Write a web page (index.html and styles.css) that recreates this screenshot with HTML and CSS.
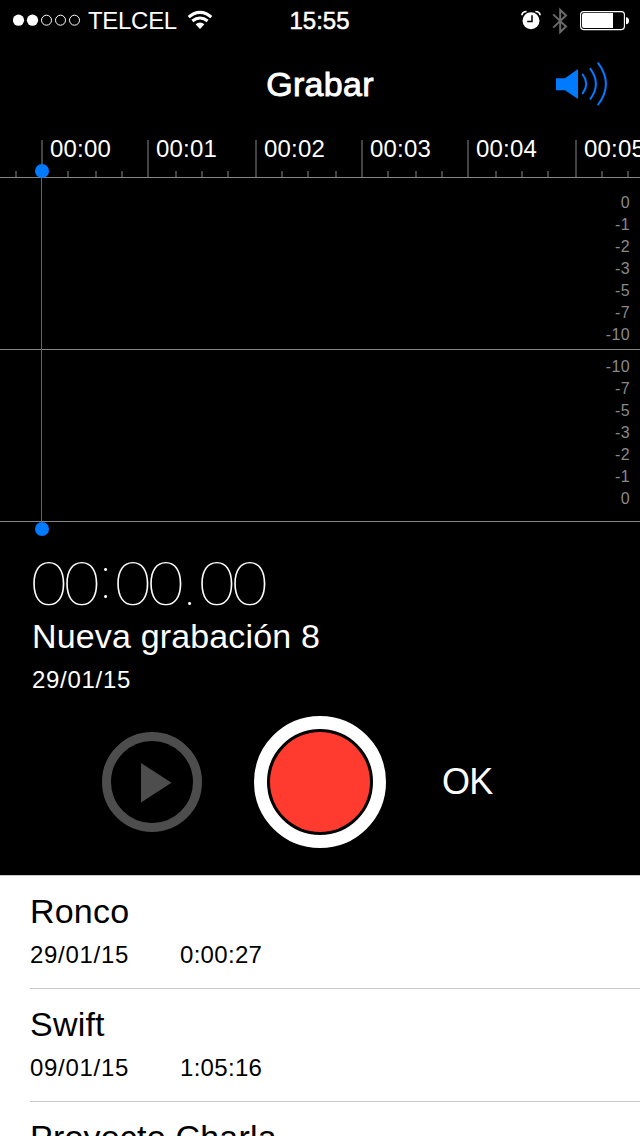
FILE: index.html
```html
<!DOCTYPE html>
<html lang="es">
<head>
<meta charset="utf-8">
<title>Grabar</title>
<link rel="stylesheet" href="styles.css">
</head>
<body>
<main class="screen">
  <header class="status">
    <div class="status-left">
      <svg class="signal" width="68" height="12" viewBox="0 0 68 12">
        <g fill="#fff"><circle cx="5.5" cy="6.2" r="5.6"/><circle cx="19.5" cy="6.2" r="5.6"/></g>
        <g fill="none" stroke="#fff"><circle cx="33.5" cy="6.2" r="5"/><circle cx="47.5" cy="6.2" r="5"/><circle cx="61.5" cy="6.2" r="5"/></g>
      </svg>
      <span class="carrier">TELCEL</span>
      <svg class="wifi" width="26" height="20" viewBox="0 0 26 20">
        <g fill="none" stroke="#fff" stroke-width="3.1">
          <path d="M1.7 7.2Q7 2.4 13 2.4T24.3 7.2"/>
          <path d="M5.4 11Q9 8 13 8T20.6 11"/>
        </g>
        <path fill="#fff" d="M13 18.9 8.6 14.3Q10.5 12.4 13 12.4T17.4 14.3Z"/>
      </svg>
    </div>
    <span class="clock">15:55</span>
    <div class="status-right">
      <svg width="20" height="20" viewBox="0 0 20 20">
        <circle cx="10" cy="10.8" r="8.5" fill="#fff"/>
        <path d="M11 5.3V11.4H6.2" fill="none" stroke="#000" stroke-width="1.5"/>
        <path d="M.9 5.3Q1.2 1.6 5.6 1.5M19.1 5.3Q18.8 1.6 14.4 1.5" fill="none" stroke="#fff" stroke-width="1.7"/>
      </svg>
      <svg class="bluetooth" width="16" height="28" viewBox="0 0 16 28">
        <path d="M1.2 7.4 14 19.6 8.2 25.1V2.9L14 8.4 1.2 20.6" fill="none" stroke="#6a6a6a" stroke-width="2"/>
      </svg>
      <svg class="battery" width="50" height="20" viewBox="0 0 50 20">
        <rect x=".6" y=".6" width="43.8" height="18" rx="3" fill="none" stroke="#fff" stroke-width="1.1"/>
        <path d="M4 2H33V17H4Q2 17 2 15V4Q2 2 4 2Z" fill="#fff"/>
        <path d="M46 6.3Q49 6.5 49 9.8T46 13.3Z" fill="#fff"/>
      </svg>
    </div>
  </header>

  <nav class="navbar">
    <h1 class="title">Grabar</h1>
    <svg class="speaker" width="54" height="46" viewBox="0 0 54 46">
      <path d="M1 16.2H10L23 7V37L10 28.2H1Z" fill="#007aff"/>
      <g fill="none" stroke="#007aff" stroke-width="2" stroke-linecap="round">
        <path d="M27.7 12.5Q34.8 22 27.7 31.3"/>
        <path d="M35.4 6.9Q46.4 22 35.4 36.8"/>
        <path d="M43.2 1.2Q58.6 22 43.2 42.5"/>
      </g>
    </svg>
  </nav>

  <section class="ruler">
    <svg class="ticks" width="640" height="38" viewBox="0 0 640 38">
      <path d="M42 0V38M148 0V38M256 0V38M362 0V38M468 0V38M576 0V38M16 31V38M68 31V38M96 31V38M122 31V38M176 31V38M202 31V38M228 31V38M282 31V38M308 31V38M336 31V38M388 31V38M416 31V38M442 31V38M496 31V38M522 31V38M548 31V38M602 31V38M628 31V38" stroke="#444" stroke-width="2"/>
    </svg>
    <div class="times">
      <span>00:00</span><span>00:01</span><span>00:02</span><span>00:03</span><span>00:04</span><span>00:05</span>
    </div>
  </section>

  <section class="wave">
    <div class="scale">
      <span>0</span><span>-1</span><span>-2</span><span>-3</span><span>-5</span><span>-7</span><span>-10</span>
    </div>
    <div class="scale">
      <span>-10</span><span>-7</span><span>-5</span><span>-3</span><span>-2</span><span>-1</span><span>0</span>
    </div>
    <div class="playhead"></div>
  </section>

  <section class="info">
    <div class="timer"><span>0</span><span>0</span><span class="colon">:</span><span>0</span><span>0</span><span class="point">.</span><span>0</span><span>0</span></div>
    <div class="name">Nueva grabación 8</div>
    <div class="date">29/01/15</div>
  </section>

  <section class="controls">
    <div class="play"><svg width="32" height="40" viewBox="0 0 32 40"><path d="M1 0 31.5 19.7 1 39.4Z" fill="#4d4d4d"/></svg></div>
    <div class="record"><div class="record-dot"></div></div>
    <div class="ok">OK</div>
  </section>

  <section class="list">
    <article class="row"><div class="row-name">Ronco</div><div class="meta"><span class="row-date">29/01/15</span><span>0:00:27</span></div></article>
    <article class="row"><div class="row-name">Swift</div><div class="meta"><span class="row-date">09/01/15</span><span>1:05:16</span></div></article>
    <article class="row"><div class="row-name">Proyecto Charla</div></article>
  </section>
</main>
</body>
</html>
```
FILE: styles.css
```css
* { box-sizing: border-box; }
body { margin: 0; background: #000; }
svg { display: block; }
.screen {
  width: 640px; height: 1136px; overflow: hidden;
  display: flex; flex-direction: column;
  background: #000; color: #fff;
  font-family: "Liberation Sans", Arial, sans-serif;
}
.screen > * { flex-shrink: 0; }

.status { height: 40px; display: grid; grid-template-columns: 1fr auto 1fr; align-items: center; padding: 0 10px 0 13px; }
.status-left { display: flex; align-items: center; }
.carrier { font-size: 24px; line-height: 28px; margin: 2px 0 0 7px; letter-spacing: -0.3px; }
.wifi { margin-left: 10px; }
.clock { font-size: 24px; line-height: 28px; margin: 2px 4px 0 0; -webkit-text-stroke: 0.5px #fff; }
.status-right { display: flex; align-items: center; justify-content: flex-end; }
.bluetooth { margin: 1px 12px 0 11px; }
.battery { margin-top: 2px; }

.navbar { height: 88px; display: grid; grid-template-columns: 1fr auto 1fr; align-items: center; padding: 0 31px; }
.title { grid-column: 2; margin: 0; font-size: 34px; line-height: 40px; font-weight: 400; letter-spacing: 0.3px; -webkit-text-stroke: 0.9px #fff; }
.speaker { justify-self: end; margin-top: 2px; }

.ruler { height: 50px; border-bottom: 1px solid #848484; position: relative; padding: 7px 0 0 50px; overflow: hidden; }
.ticks { position: absolute; left: 0; top: 12px; }
.times { display: grid; grid-template-columns: 106px 108px 106px 106px 108px 106px; font-size: 24px; line-height: 28px; letter-spacing: 0.2px; }

.wave { height: 344px; display: flex; flex-direction: column; position: relative; }
.scale {
  height: 172px; border-bottom: 1px solid #848484; padding: 14px 10px 0 0;
  display: flex; flex-direction: column; align-items: flex-end;
  font-size: 16px; line-height: 22px; letter-spacing: 0.4px; color: #8a8a8a;
}
.scale + .scale { padding-top: 6px; }
.playhead { position: absolute; left: 41px; top: -6px; width: 1px; height: 357px; background: #007aff; }
.playhead::before, .playhead::after { content: ""; position: absolute; left: -6px; width: 14px; height: 14px; border-radius: 50%; background: #007aff; }
.playhead::before { top: -8px; }
.playhead::after { bottom: -7px; }

.info { height: 183px; padding: 32px 32px 0; }
.timer { display: flex; height: 60px; font-family: Inter, "Liberation Sans", sans-serif; font-weight: 100; font-size: 58px; line-height: 60px; }
.timer span { width: 33px; text-align: center; transform: translateX(-0.5px) scaleX(1.2); }
.timer .colon, .timer .point { width: 18px; transform: translateX(-1.5px); }
.timer .colon { line-height: 47px; }
.name { font-size: 34px; line-height: 40px; margin-top: 2px; letter-spacing: 0.15px; }
.date { font-size: 24px; line-height: 28px; margin-top: 10px; letter-spacing: 0.7px; }

.controls { height: 170px; display: flex; align-items: flex-start; padding: 11px 0 0 102px; }
.play { width: 100px; height: 100px; margin-top: 16px; border: 9px solid #4d4d4d; border-radius: 50%; display: flex; align-items: center; padding: 1px 0 0 29px; }
.record { width: 132px; height: 132px; margin-left: 52px; border: 13px solid #fff; border-radius: 50%; padding: 3px; }
.record-dot { width: 100px; height: 100px; border-radius: 50%; background: #ff3b30; }
.ok { font-size: 36px; line-height: 42px; margin: 45px 0 0 56px; letter-spacing: -0.8px; }

.list { height: 261px; background: #fff; color: #000; border-top: 1px solid #c8c7cc; overflow: hidden; }
.row { height: 113px; margin-left: 30px; border-bottom: 1px solid #c8c7cc; padding-top: 15px; }
.row-name { font-size: 34px; line-height: 40px; letter-spacing: 0.2px; }
.meta { display: flex; font-size: 24px; line-height: 28px; margin-top: 10px; letter-spacing: 0.3px; }
.row-date { width: 150px; letter-spacing: 0.7px; }
```
